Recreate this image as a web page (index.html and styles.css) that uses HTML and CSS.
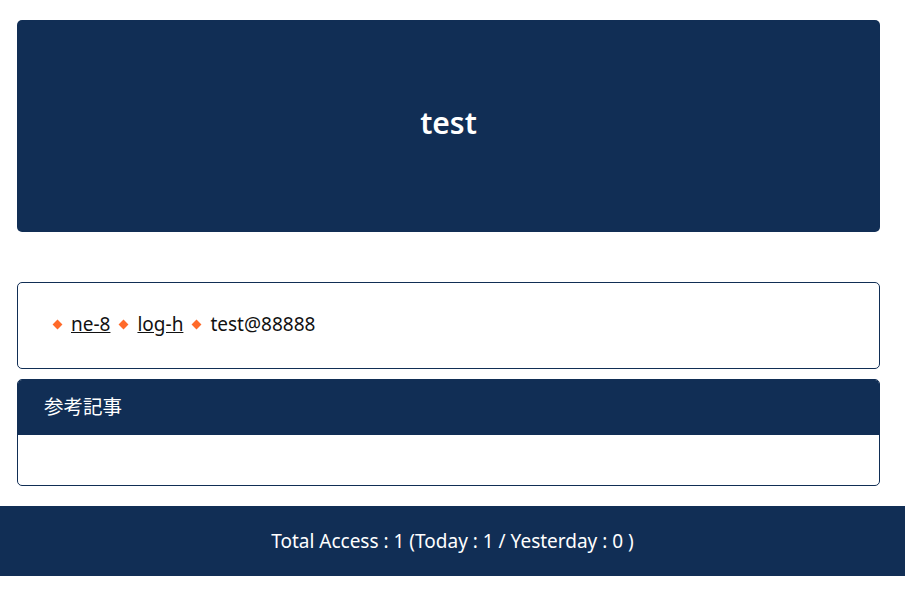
FILE: index.html
```html
<!DOCTYPE html>
<html lang="ja">
<head>
<meta charset="utf-8">
<title>test</title>
<link rel="stylesheet" href="styles.css">
</head>
<body>
<div class="wrap">
  <header class="hero"><h1 class="hero-title">test</h1></header>
  <nav class="links">
    <ul class="link-list">
      <li class="link-item"><a href="#">ne-8</a></li>
      <li class="link-item"><a href="#">log-h</a></li>
      <li class="link-item">test@88888</li>
    </ul>
  </nav>
  <section class="ref">
    <div class="ref-head">参考記事</div>
    <div class="ref-body"></div>
  </section>
</div>
<footer class="foot">Total Access : 1 (Today : 1 / Yesterday : 0 )</footer>
</body>
</html>
```
FILE: styles.css
```css
html, body { margin: 0; padding: 0; background: #fff; }
body {
  font-family: "Noto Sans", "Open Sans", "Noto Sans CJK JP", sans-serif;
  color: #111;
  font-size: 19px;
}
.wrap { padding: 20px 25px 20px 17px; display: flex; flex-direction: column; }
.hero {
  background: #112e55;
  border-radius: 5px;
  height: 212px;
  display: flex;
  align-items: center;
  justify-content: center;
}
.hero-title {
  margin: 0;
  color: #fff;
  font-size: 30px;
  font-weight: 600;
  line-height: 1;
  position: relative;
  top: -3px;
}
.links {
  margin-top: 50px;
  border: 1px solid #112e55;
  border-radius: 5px;
  height: 85px;
  display: flex;
  align-items: center;
  padding-left: 35.5px;
}
.link-list { list-style: none; margin: 0; padding: 0; display: flex; gap: 9.5px; }
.link-item { display: flex; align-items: center; gap: 10.5px; line-height: 1; position: relative; top: -1px; }
.link-item::before {
  content: "";
  width: 7px; height: 7px;
  background: #ff6a2a;
  transform: rotate(45deg);
}
.link-item a { color: #111; text-decoration: underline; }
.ref {
  margin-top: 10px;
  border: 1px solid #112e55;
  border-radius: 5px;
  overflow: hidden;
}
.ref-head {
  background: #112e55;
  color: #fff;
  height: 55px;
  display: flex;
  align-items: center;
  padding-left: 26px;
  padding-bottom: 4px;
  box-sizing: border-box;
  font-family: "Noto Sans CJK JP", sans-serif;
  font-size: 19.5px;
}
.ref-body { height: 50px; }
.foot {
  background: #112e55;
  color: #fff;
  height: 70px;
  display: flex;
  align-items: center;
  justify-content: center;
  font-size: 19px;
}
```
